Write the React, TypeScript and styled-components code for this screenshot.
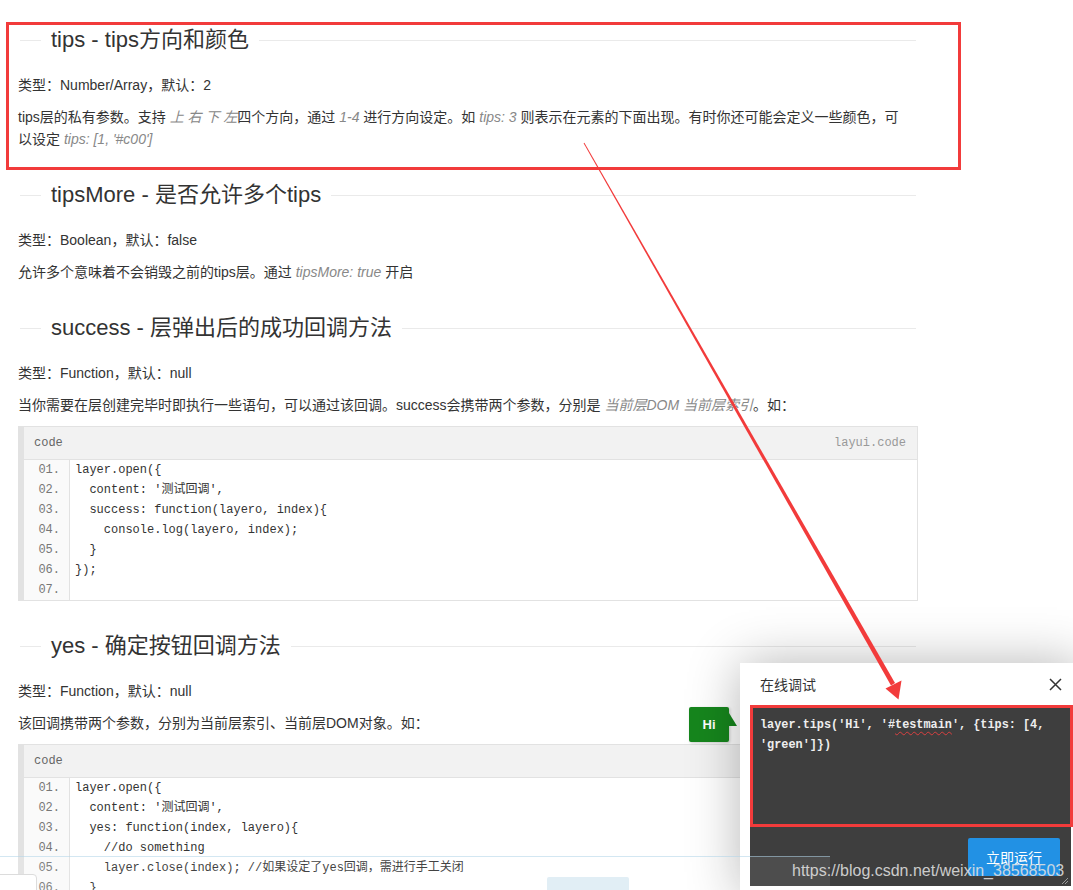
import React from "react";
import styled, { createGlobalStyle } from "styled-components";

const GlobalStyle = createGlobalStyle`
  html, body { margin: 0; padding: 0; background: #fff; overflow: hidden; }
  body {
    font-family: "Liberation Sans", Arial, "Noto Sans CJK SC", sans-serif;
    font-size: 14px;
    color: #333;
  }
`;

const MONO = `"Liberation Mono", "Courier New", "Noto Sans CJK SC", monospace`;

const Viewport = styled.div`
  position: relative;
  width: 1073px;
  height: 890px;
  overflow: hidden;
  background: #fff;
`;

const Doc = styled.main`
  width: 900px;
  padding: 5px 0 0 18px;
  display: flex;
  flex-direction: column;
`;

const FieldTitle = styled.div`
  display: flex;
  align-items: center;
  height: 30px;
  margin: 20px 2px 19px;
  &::before {
    content: "";
    width: 21px;
    border-top: 1px solid #eaeaea;
  }
  &::after {
    content: "";
    flex: 1;
    border-top: 1px solid #eaeaea;
  }
`;

const Legend = styled.h2`
  margin: 0;
  padding: 0 10px;
  font-size: 22px;
  font-weight: 400;
  line-height: 30px;
  color: #333;
  white-space: nowrap;
`;

const Para = styled.p`
  margin: 0 0 10px;
  width: 888px;
  line-height: 22px;
  color: #333;
`;

const Em = styled.em`
  font-style: italic;
  color: #888;
`;

const CodeView = styled.div`
  margin: 0 0 10px;
  border: 1px solid #e2e2e2;
  border-left-width: 6px;
  background: #fafafa;
  font-family: ${MONO};
  font-size: 12px;
  color: #333;
`;

const CodeHead = styled.div`
  display: flex;
  justify-content: space-between;
  height: 32px;
  line-height: 32px;
  padding: 0 11px 0 10px;
  border-bottom: 1px solid #e2e2e2;
  background: #f2f2f2;
  color: #666;
`;

const CodeLink = styled.span`
  color: #999;
`;

const CodeList = styled.ol`
  margin: 0;
  padding: 0;
  list-style: none;
`;

const CodeLine = styled.li`
  display: flex;
  height: 20px;
  line-height: 20px;
`;

const LineNo = styled.span`
  width: 36px;
  padding-right: 9px;
  text-align: right;
  color: #777;
`;

const LineText = styled.span`
  flex: 1;
  padding-left: 5px;
  border-left: 1px solid #e2e2e2;
  background: #fff;
  white-space: pre;
`;

const Popup = styled.section`
  position: absolute;
  left: 740px;
  top: 663px;
  width: 341px;
  padding-bottom: 10px;
  background: #fff;
  box-shadow: 1px 1px 50px rgba(0, 0, 0, 0.3);
  display: flex;
  flex-direction: column;
`;

const PopupTitle = styled.header`
  display: flex;
  align-items: center;
  justify-content: space-between;
  height: 42px;
  padding: 0 19px 0 20px;
  font-size: 14px;
  color: #333;
`;

const PopupBody = styled.div`
  padding: 0 10px;
`;

const Console = styled.div`
  position: relative;
  background: #3e3e3e;
  display: flex;
  flex-direction: column;
`;

const Editor = styled.div`
  height: 121px;
  box-sizing: border-box;
  padding: 10px;
  font-family: ${MONO};
  font-size: 11.85px;
  font-weight: bold;
  line-height: 20px;
  color: #eee;
  white-space: pre-wrap;
`;

const Squiggle = styled.span`
  text-decoration: underline wavy #d94040;
  text-decoration-thickness: 1px;
  text-underline-offset: 3px;
`;

const ActionRow = styled.div`
  display: flex;
  justify-content: flex-end;
  padding: 12px 11px 10px;
`;

const RunButton = styled.button`
  width: 92px;
  height: 38px;
  border: none;
  border-radius: 2px;
  background: #2291e4;
  color: #fff;
  font-family: "Liberation Sans", "Noto Sans CJK SC", sans-serif;
  font-size: 14px;
`;

const Grip = styled.svg`
  position: absolute;
  right: 3px;
  bottom: 2px;
`;

const Tip = styled.div`
  position: absolute;
  left: 689px;
  top: 707px;
  width: 40px;
  height: 35px;
  border-radius: 2px;
  background: #16861d;
  color: #fff;
  font-size: 13px;
  font-weight: bold;
  display: flex;
  align-items: center;
  justify-content: center;
  box-shadow: 1px 1px 3px rgba(0, 0, 0, 0.2);
  &::after {
    content: "";
    position: absolute;
    left: 40px;
    top: 6px;
    width: 8px;
    height: 13px;
    background: #16861d;
    clip-path: polygon(0 0, 100% 100%, 0 100%);
  }
`;

const Watermark = styled.div`
  position: absolute;
  left: 792px;
  top: 862px;
  font-family: "Liberation Sans", Arial, sans-serif;
  font-size: 16px;
  line-height: 18px;
  color: rgba(225, 225, 225, 0.88);
  white-space: nowrap;
`;

const Mark = styled.div<{ $l: number; $t: number; $w: number; $h: number }>`
  position: absolute;
  left: ${(p) => p.$l}px;
  top: ${(p) => p.$t}px;
  width: ${(p) => p.$w}px;
  height: ${(p) => p.$h}px;
  box-sizing: border-box;
  border: 3px solid #f23b3b;
  pointer-events: none;
`;

const ArrowLayer = styled.svg`
  position: absolute;
  left: 0;
  top: 0;
  pointer-events: none;
`;

const FadeLine = styled.div`
  position: absolute;
  left: 0;
  top: 856px;
  width: 830px;
  height: 34px;
  border-top: 1px solid rgba(175, 212, 232, 0.55);
  background: rgba(255, 255, 255, 0.08);
`;

const CornerTab = styled.div`
  position: absolute;
  left: -1px;
  top: 874px;
  width: 36px;
  height: 20px;
  background: #fff;
  border: 1px solid #dcdcdc;
  border-radius: 0 4px 0 0;
`;

const BlueTab = styled.div`
  position: absolute;
  left: 547px;
  top: 877px;
  width: 82px;
  height: 14px;
  background: #e1eef5;
  border-radius: 2px 2px 0 0;
`;

function CodeBlock({ lines }: { lines: string[] }) {
  return (
    <CodeView>
      <CodeHead>
        <span>code</span>
        <CodeLink>layui.code</CodeLink>
      </CodeHead>
      <CodeList>
        {lines.map((l, i) => (
          <CodeLine key={i}>
            <LineNo>{String(i + 1).padStart(2, "0")}.</LineNo>
            <LineText>{l}</LineText>
          </CodeLine>
        ))}
      </CodeList>
    </CodeView>
  );
}

const successCode = [
  "layer.open({",
  "  content: '测试回调',",
  "  success: function(layero, index){",
  "    console.log(layero, index);",
  "  }",
  "});",
  "",
];

const yesCode = [
  "layer.open({",
  "  content: '测试回调',",
  "  yes: function(index, layero){",
  "    //do something",
  "    layer.close(index); //如果设定了yes回调，需进行手工关闭",
  "  }",
  "});",
  "",
];

export default function App() {
  return (
    <Viewport>
      <GlobalStyle />
      <Doc>
        <FieldTitle>
          <Legend>tips - tips方向和颜色</Legend>
        </FieldTitle>
        <Para>类型：Number/Array，默认：2</Para>
        <Para>
          tips层的私有参数。支持 <Em>上 右 下 左</Em>四个方向，通过 <Em>1-4</Em> 进行方向设定。如 <Em>tips: 3</Em> 则表示在元素的下面出现。有时你还可能会定义一些颜色，可以设定 <Em>tips: [1, '#c00']</Em>
        </Para>

        <FieldTitle>
          <Legend>tipsMore - 是否允许多个tips</Legend>
        </FieldTitle>
        <Para>类型：Boolean，默认：false</Para>
        <Para>
          允许多个意味着不会销毁之前的tips层。通过 <Em>tipsMore: true</Em> 开启
        </Para>

        <FieldTitle>
          <Legend>success - 层弹出后的成功回调方法</Legend>
        </FieldTitle>
        <Para>类型：Function，默认：null</Para>
        <Para>
          当你需要在层创建完毕时即执行一些语句，可以通过该回调。success会携带两个参数，分别是 <Em>当前层DOM 当前层索引</Em>。如：
        </Para>
        <CodeBlock lines={successCode} />

        <FieldTitle>
          <Legend>yes - 确定按钮回调方法</Legend>
        </FieldTitle>
        <Para>类型：Function，默认：null</Para>
        <Para>该回调携带两个参数，分别为当前层索引、当前层DOM对象。如：</Para>
        <CodeBlock lines={yesCode} />
      </Doc>

      <Tip>Hi</Tip>

      <Popup>
        <PopupTitle>
          <span>在线调试</span>
          <svg width="13" height="13" viewBox="0 0 13 13">
            <path d="M1 1 L12 12 M12 1 L1 12" stroke="#333" strokeWidth="1.5" fill="none" />
          </svg>
        </PopupTitle>
        <PopupBody>
          <Console>
            <Editor>
              layer.tips('Hi', '#<Squiggle>testmain</Squiggle>', {"{"}tips: [4, 'green']{"}"})
            </Editor>
            <ActionRow>
              <RunButton>立即运行</RunButton>
            </ActionRow>
            <Grip width="7" height="7" viewBox="0 0 7 7">
              <path d="M1 7 L7 1 M4 7 L7 4" stroke="#9a9a9a" strokeWidth="1" />
            </Grip>
          </Console>
        </PopupBody>
      </Popup>

      <FadeLine />
      <CornerTab />
      <BlueTab />

      <Watermark>https://blog.csdn.net/weixin_38568503</Watermark>

      <Mark $l={6} $t={22} $w={955} $h={148} />
      <Mark $l={750} $t={705} $w={323} $h={122} />

      <ArrowLayer width="1073" height="890" viewBox="0 0 1073 890">
        <polygon
          points="583.6,143.2 584.4,142.8 895,683 891,685.4"
          fill="#f23b3b"
        />
        <polygon points="885.5,688.5 901.5,680.5 898.5,699.5" fill="#f23b3b" />
      </ArrowLayer>
    </Viewport>
  );
}
